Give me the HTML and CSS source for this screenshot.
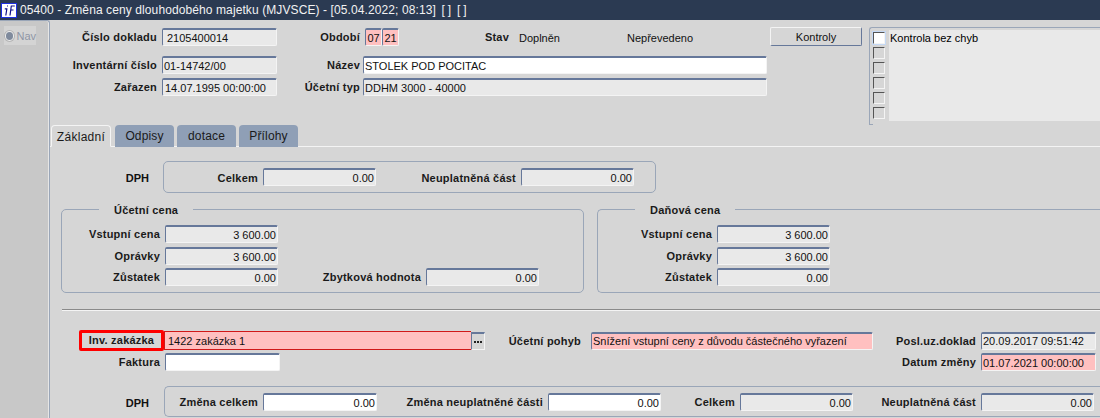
FILE: index.html
```html
<!DOCTYPE html>
<html lang="cs">
<head>
<meta charset="utf-8">
<title>05400</title>
<link rel="stylesheet" href="styles.css">
</head>
<body>
<header class="titlebar">
  <span class="logo"><svg width="14" height="13" viewBox="0 0 14 13"><path d="M4.800 5 3.800 11.500M5 2h1M2.800 4.800h2.600M9.300 2 8 11.500M8.800 2h4M8.300 6h3.200" fill="none" stroke="#10108a" stroke-width="1.200"/></svg></span>
  <span class="title">05400 - Změna ceny dlouhodobého majetku (MJVSCE) - [05.04.2022; 08:13]<span class="tail">&nbsp;&nbsp;[ ]&nbsp;&nbsp;[ ]</span></span>
</header>
<div class="app">
  <aside class="side">
    <div class="nav"><span class="radio"></span><span>Nav</span></div>
  </aside>
  <main class="main">
    <section class="head">
      <div class="head-fields">
        <div class="row r1">
          <label class="lab l112">Číslo dokladu</label><span class="f ro w115 pad-4">2105400014</span>
          <label class="lab l88">Období</label><span class="f pink w17 ctr">07</span><span class="f pink w17 ctr">21</span>
          <label class="lab stav">Stav</label><span class="txt st1">Doplněn</span><span class="txt st2">Nepřevedeno</span>
          <button class="btn">Kontroly</button>
        </div>
        <div class="row r2">
          <label class="lab l112">Inventární číslo</label><span class="f ro w115">01-14742/00</span>
          <label class="lab l86">Název</label><span class="f wh w404">STOLEK POD POCITAC</span>
        </div>
        <div class="row r3">
          <label class="lab l112">Zařazen</label><span class="f ro w115 pad-2">14.07.1995 00:00:00</span>
          <label class="lab l86">Účetní typ</label><span class="f ro w404">DDHM 3000 - 40000</span>
        </div>
      </div>
      <div class="checks">
        <div class="boxes"><span class="cb on"></span><span class="cb"></span><span class="cb"></span><span class="cb"></span><span class="cb"></span><span class="cb"></span></div>
        <div class="msgs">Kontrola bez chyb</div>
      </div>
      <nav class="tabs">
        <span class="tab active">Základní</span><span class="tab">Odpisy</span><span class="tab">dotace</span><span class="tab">Přílohy</span>
      </nav>
    </section>

    <section class="body">
      <div class="dph-row">
        <span class="dph-lab">DPH</span>
        <div class="box dph-top">
          <label class="lab l99">Celkem</label><span class="f ro w113 num">0.00</span>
          <label class="lab l145">Neuplatněná část</label><span class="f ro w113 num">0.00</span>
        </div>
      </div>
      <div class="prices">
        <fieldset class="box price ucetni">
          <legend>Účetní cena</legend>
          <div class="prow"><label class="lab l103">Vstupní cena</label><span class="f ro w113 num">3 600.00</span></div>
          <div class="prow"><label class="lab l103">Oprávky</label><span class="f ro w113 num">3 600.00</span></div>
          <div class="prow"><label class="lab l103">Zůstatek</label><span class="f ro w113 num">0.00</span><label class="lab l148">Zbytková hodnota</label><span class="f ro w113 num">0.00</span></div>
        </fieldset>
        <fieldset class="box price danova">
          <legend>Daňová cena</legend>
          <div class="prow"><label class="lab l119">Vstupní cena</label><span class="f ro w113 num">3 600.00</span></div>
          <div class="prow"><label class="lab l119">Oprávky</label><span class="f ro w113 num">3 600.00</span></div>
          <div class="prow"><label class="lab l119">Zůstatek</label><span class="f ro w113 num">0.00</span></div>
        </fieldset>
      </div>
      <hr class="sep">
      <div class="lower">
        <div class="row l1">
          <label class="inv">Inv. zakázka</label><span class="f red">1422 zakázka 1</span><button class="dots"><svg width="8" height="2" viewBox="0 0 8 2"><path d="M0 0h2v2H0zM3 0h2v2H3zM6 0h2v2H6z" fill="#222"/></svg></button>
          <label class="lab pohyb">Účetní pohyb</label><span class="f pink w282">Snížení vstupní ceny z důvodu částečného vyřazení</span>
          <label class="lab l108">Posl.uz.doklad</label><span class="f ro w115">20.09.2017 09:51:42</span>
        </div>
        <div class="row l2">
          <label class="lab l115">Faktura</label><span class="f wh w115"></span>
          <label class="lab l701">Datum změny</label><span class="f pink w115">01.07.2021 00:00:00</span>
        </div>
      </div>
      <div class="dph-row bottom">
        <span class="dph-lab">DPH</span>
        <div class="box dph-bot">
          <label class="lab l98">Změna celkem</label><span class="f wh w114 num">0.00</span>
          <label class="lab l171">Změna neuplatněné části</label><span class="f wh w113 num">0.00</span>
          <label class="lab l79">Celkem</label><span class="f ro w113 num">0.00</span>
          <label class="lab l128">Neuplatněná část</label><span class="f ro w113 num">0.00</span>
        </div>
      </div>
    </section>
  </main>
</div>
</body>
</html>
```
FILE: styles.css
```css
* { box-sizing: border-box; }
html, body { margin: 0; height: 418px; overflow: hidden; }
body { background: #d6d6d6; font: 11px "Liberation Sans", Arial, sans-serif; color: #111; }

.titlebar { height: 20px; background: #2b3a52; display: flex; align-items: center; color: #f2f2f2; padding-left: 1px; }
.logo { width: 16px; height: 15px; display: block; flex: none; margin-right: 3px; background: #fff; border: 1px solid #1c2fe0; }
.logo svg { display: block; }
.title { font-size: 12px; letter-spacing: .1px; white-space: nowrap; }
.tail { word-spacing: -.6px; }

.app { display: flex; height: 398px; }
.side { width: 50px; flex: none; background: #c8c8c8; border-right: 1px solid #9aa6b8; border-top: 1px solid #9aa6b8; border-top-right-radius: 3px; box-shadow: inset -1px 0 0 #e6e6e6; padding: 5px 0 0 4px; }
.nav { width: 32px; height: 19px; background: #d4d4d4; color: #8f96a6; display: flex; align-items: center; gap: 2px; padding-left: 1px; }
.radio { width: 10px; height: 10px; border-radius: 50%; background: #7f8a9c; border: 1px solid #eee; box-shadow: 0 0 0 1px #b5b5b5; }

.main { flex: 1; min-width: 0; }
.head { height: 127px; position: relative; border-bottom: 1px solid #f4f4f4; }
.head-fields { padding-top: 8px; }
.row { display: flex; align-items: flex-start; height: 18px; }
.r2 { margin-top: 10px; }
.r3 { margin-top: 4px; }

.lab { display: block; flex: none; font-weight: 700; text-align: right; padding: 2px 5px 0 0; white-space: nowrap; letter-spacing: .22px; color: #1a1a1a; line-height: 15px; }
.txt { display: block; flex: none; line-height: 18px; padding-top: 1px; }

.l79 { width: 79px; } .l86 { width: 86px; padding-right: 3px; } .l88 { width: 88px; }
.l98 { width: 98px; } .l99 { width: 99px; } .l103 { width: 103px; } .l108 { width: 108px; }
.l112 { width: 112px; } .l115 { width: 115px; } .l119 { width: 119px; } .l128 { width: 128px; }
.l145 { width: 145px; } .l148 { width: 148px; } .l171 { width: 171px; } .l701 { width: 701px; }
.stav { width: 120px; padding-right: 10px; }
.pohyb { width: 106px; padding-right: 10px; }
.st1 { width: 108px; }
.st2 { width: 143px; }

.w17 { width: 17px; } .w113 { width: 113px; } .w114 { width: 114px; } .w115 { width: 115px; }
.w282 { width: 282px; } .w404 { width: 404px; }

.f { display: block; flex: none; height: 18px; line-height: 16px; padding: 0 1px; border: 1px solid; border-color: #66789a #f4f4f4 #f4f4f4 #66789a; border-top-width: 2px; border-radius: 2px; white-space: nowrap; overflow: hidden; background: #e9e9e9; color: #111; }
.ro { background: #e9e9e9; }
.wh { background: #fff; }
.pink { background: #ffc0c0; }
.ctr { text-align: center; padding: 0; }
.num { text-align: right; }
.pad-4 { padding-left: 4px; }
.pad-2 { padding-left: 2px; }

.btn { display: block; flex: none; width: 92px; height: 19px; margin-top: -1px; padding: 1px 0 0; font: inherit; color: #111; background: #d6d6d6; border: 1px solid; border-color: #f4f4f4 #66789a #66789a #f4f4f4; border-radius: 2px; }

.checks { position: absolute; left: 819px; top: 7px; right: 0; height: 97px; display: flex; border: 1px solid #9aa6b8; border-right: 0; border-bottom: 0; border-top-left-radius: 3px; }
.checks::after { content: ""; position: absolute; left: -1px; bottom: -1px; width: 3px; height: 3px; border: solid #9aa6b8; border-width: 0 0 1px 1px; }
.boxes { width: 18px; padding: 4px 0 0 3px; flex: none; display: flex; flex-direction: column; gap: 3px; }
.cb { display: block; width: 12px; height: 12px; border: 1px solid; border-color: #555 #f4f4f4 #f4f4f4 #555; background: #d6d6d6; }
.cb.on { background: #fff; box-shadow: 0 0 0 1px #c5d9f5; }
.msgs { flex: 1; margin-top: 2px; margin-left: 1px; height: 91px; background: #e9e9e9; padding: 2px 0 0 1px; color: #000; }

.tabs { position: absolute; left: 1px; bottom: -1px; display: flex; gap: 3px; align-items: flex-end; }
.tab { width: 59px; height: 22px; background: #8f9fb6; border-radius: 4px 4px 0 0; text-align: center; line-height: 22px; font-size: 12px; letter-spacing: .15px; color: #1a1a1a; }
.tab.active { width: 60px; background: #d6d6d6; border: 1px solid #f4f4f4; border-bottom-color: #d6d6d6; margin-right: 1px; letter-spacing: .3px; }

.body { padding-top: 14px; }
.dph-row { display: flex; }
.dph-lab { display: block; width: 113px; padding: 9px 14px 0 0; text-align: right; font-weight: 700; height: 31px; line-height: 17px; flex: none; }
.box { border: 1px solid #9aa6b8; border-radius: 5px; }
.dph-top { width: 493px; height: 32px; display: flex; align-items: center; }

.prices { display: flex; margin: 9px 0 0 11px; gap: 13px; }
fieldset.price { margin: 0; padding: 0; height: 91px; min-width: 0; flex: none; }
.price legend { font-weight: 700; padding: 2px 15px 0; letter-spacing: .22px; margin-left: 37px; line-height: 13px; color: #1a1a1a; }
.ucetni { width: 523px; }
.danova { width: 520px; border-right: 0; border-radius: 5px 0 0 5px; }
.prow { display: flex; align-items: flex-start; height: 18px; margin-top: 4px; }
.prow:last-child { margin-top: 3px; }
.prow:first-of-type { margin-top: 8px; }

.sep { margin: 16px 0 0 12px; height: 2px; border: 0; border-top: 1px solid #8a8a8a; border-bottom: 1px solid #f4f4f4; }

.lower { padding-top: 19px; }
.l1 { padding-left: 29px; height: 21px; }
.l1 .lab, .l1 .f, .l1 .dots { margin-top: 2px; }
.l1 .f { line-height: 15px; }
.l1 .red { margin-top: 1px; line-height: 18px; }
.l2 { margin-top: 2px; }
.inv { display: block; flex: none; width: 85px; height: 21px; border: 3px solid #f00; border-radius: 2px; font-weight: 700; text-align: center; line-height: 15px; letter-spacing: .22px; color: #1a1a1a; }
.red { width: 307px; height: 19px; background: #ffc0c0; border: 1px solid #d01818; border-right: 0; border-radius: 0; padding-left: 3px; }
.dots { display: flex; align-items: center; justify-content: center; flex: none; width: 14px; height: 18px; padding: 0; border: 1px solid; border-color: #66789a #f4f4f4 #f4f4f4 #66789a; border-top-width: 2px; background: #d6d6d6; }

.bottom { margin-top: 15px; }
.dph-bot { flex: 1; height: 31px; display: flex; align-items: center; border-right: 0; border-radius: 5px 0 0 5px; margin-left: 1px; }
```
